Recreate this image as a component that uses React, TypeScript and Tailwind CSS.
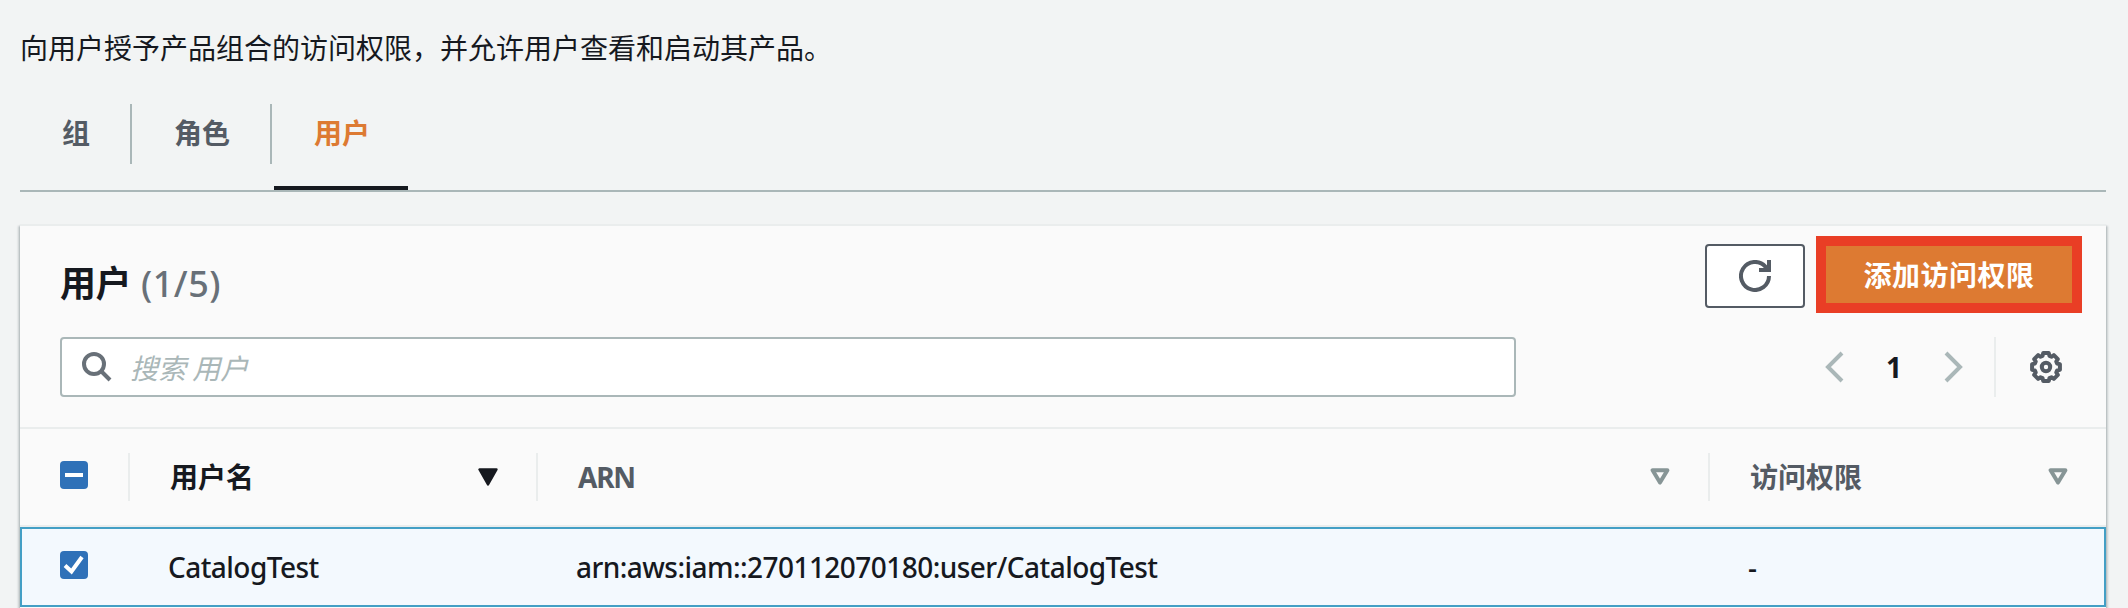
import React from "react";

const SortIcon = ({ active = false }: { active?: boolean }) => (
  <svg width="20" height="18" viewBox="0 0 20 18" className="block">
    {active ? (
      <path d="M1.5 1.5h17L10 16.5z" fill="#16191f" stroke="#16191f" strokeWidth="2.4" strokeLinejoin="round" />
    ) : (
      <path d="M2.6 2.2h14.8L10 14.6z" fill="none" stroke="#879596" strokeWidth="4" strokeLinejoin="round" />
    )}
  </svg>
);

const Divider = ({ className = "" }: { className?: string }) => (
  <div className={`w-0.5 shrink-0 ${className}`} />
);

const gearPath = (() => {
  const pts: string[] = [];
  for (let i = 0; i < 8; i++) {
    const a = (i * Math.PI) / 4 - Math.PI / 2;
    const p = (r: number, d: number) =>
      `${(16 + r * Math.cos(a + d)).toFixed(2)} ${(16 + r * Math.sin(a + d)).toFixed(2)}`;
    pts.push(p(14.2, -0.2), p(14.2, 0.2), p(11.6, 0.3), p(11.6, 0.485));
  }
  return `M${pts.join("L")}Z`;
})();

export default function App() {
  return (
    <div className="h-[608px] w-[2128px] overflow-hidden bg-[#f2f4f4] pl-5 pr-[22px] font-['Noto_Sans','Noto_Sans_CJK_SC',sans-serif] text-[28px] leading-[44px] text-[#16191f]">
      <p className="pt-[25px] font-['Noto_Sans_CJK_SC',sans-serif]">
        向用户授予产品组合的访问权限，并允许用户查看和启动其产品。
      </p>

      <nav className="mt-[35px] flex h-[88px] border-b-2 border-[#aab7b8] font-['Noto_Sans_CJK_SC',sans-serif] font-bold leading-[57px] text-[#545b64]">
        <div className="h-[60px] w-28 border-r-2 border-[#aab7b8] pl-[42px]">组</div>
        <div className="h-[60px] w-[140px] border-r-2 border-[#aab7b8] pl-[42px]">角色</div>
        <div className="ml-0.5 h-[86px] w-[134px] border-b-4 border-[#16191f] pl-10 text-[#dd7a32]">用户</div>
      </nav>

      <section className="mt-8 h-[400px] border-t-2 border-[#eaeded] bg-[#fafafa] shadow-[0_2px_2px_0_rgba(0,28,36,0.3),2px_2px_2px_0_rgba(0,28,36,0.15),-2px_2px_2px_0_rgba(0,28,36,0.15)]">
        <div className="flex h-[111px] items-start pl-10 pr-6 pt-2.5">
          <h2 className="mt-[18px] text-[36px] font-bold leading-[54px]">
            <span className="font-['Noto_Sans_CJK_SC',sans-serif] tracking-[-0.5px]">用户</span>
            <span className="ml-2.5 font-medium tracking-[0.5px] text-[#687078]">(1/5)</span>
          </h2>
          <div className="ml-auto mt-2 flex h-16 w-[100px] items-center justify-center rounded-[4px] border-2 border-[#545b64] bg-white">
            <svg width="32" height="32" viewBox="0 0 32 32" fill="none" stroke="#545b64" strokeWidth="4">
              <path d="M30 16a14 14 0 1 1-3.6-9.4L29 10" />
              <path d="M30 0v10H20" />
            </svg>
          </div>
          <button className="ml-[11px] h-[77px] w-[266px] border-[10px] border-[#e93e25] bg-[#dd7a32] font-['Noto_Sans_CJK_SC',sans-serif] font-bold leading-[57px] tracking-[0.5px] text-white">
            添加访问权限
          </button>
        </div>

        <div className="flex h-[90px] items-start pl-10">
          <div className="flex h-[60px] w-[1456px] items-center rounded-[4px] border-2 border-[#aab7b8] bg-white">
            <svg width="30" height="30" viewBox="0 0 30 30" className="ml-5 block" fill="none" stroke="#687078" strokeWidth="4">
              <circle cx="12" cy="12" r="10" />
              <path d="M19 19l9 9" />
            </svg>
            <span className="ml-[18px] font-['Noto_Sans_CJK_SC',sans-serif] italic leading-[46px] text-[#aab7b8]">搜索 用户</span>
          </div>
          <div className="ml-[308px] flex h-[60px] items-center">
            <svg width="20" height="32" viewBox="0 0 20 32" fill="none" stroke="#aab7b8" strokeWidth="4">
              <path d="M18 2L4 16l14 14" />
            </svg>
            <span className="w-[100px] text-center font-bold">1</span>
            <svg width="20" height="32" viewBox="0 0 20 32" fill="none" stroke="#aab7b8" strokeWidth="4">
              <path d="M2 2l14 14L2 30" />
            </svg>
            <Divider className="ml-[30px] h-[60px] bg-[#eaeded]" />
            <svg width="32" height="32" viewBox="0 0 32 32" className="ml-[34px]" fill="none" stroke="#545b64" strokeWidth="4" strokeLinejoin="round">
              <path d={gearPath} />
              <circle cx="16" cy="16" r="4.2" />
            </svg>
          </div>
        </div>

        <div className="flex h-[100px] items-center border-y-2 border-[#eaeded] font-bold">
          <div className="ml-10 flex h-7 w-7 -translate-y-0.5 items-center justify-center rounded-[4px] bg-[#2f71b8]">
            <div className="h-1 w-[18px] bg-white" />
          </div>
          <Divider className="ml-10 h-12 bg-[#eaeded]" />
          <div className="ml-10 w-[308px] pb-0.5 font-['Noto_Sans_CJK_SC',sans-serif]">用户名</div>
          <SortIcon active />
          <Divider className="ml-[38px] h-12 bg-[#eaeded]" />
          <div className="ml-10 w-[1072px] tracking-[-1.2px] text-[#545b64]">ARN</div>
          <SortIcon />
          <Divider className="ml-[38px] h-12 bg-[#eaeded]" />
          <div className="ml-10 w-[298px] pb-0.5 font-['Noto_Sans_CJK_SC',sans-serif] text-[#545b64]">访问权限</div>
          <SortIcon />
        </div>

        <div className="flex h-20 items-center border-2 border-[#439fc5] bg-[#f3f9fe] font-medium">
          <div className="ml-[38px] h-7 w-7 -translate-y-0.5 rounded-[4px] bg-[#2f71b8]">
            <svg width="28" height="28" viewBox="0 0 28 28" fill="none" stroke="#fff" strokeWidth="4">
              <path d="M5 14.5l6.5 6L22 6" />
            </svg>
          </div>
          <div className="ml-20 w-[408px] pb-px tracking-[-0.55px]">CatalogTest</div>
          <div className="w-[1172px] pb-px tracking-[-0.55px]">arn:aws:iam::270112070180:user/CatalogTest</div>
          <div className="pb-px">-</div>
        </div>
      </section>
    </div>
  );
}
